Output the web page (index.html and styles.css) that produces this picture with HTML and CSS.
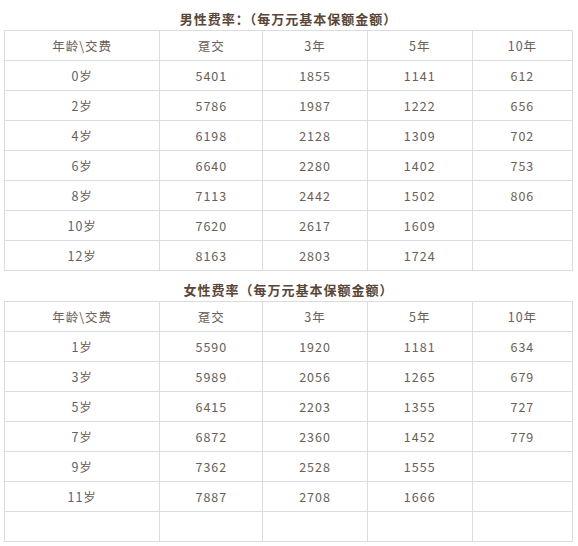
FILE: index.html
```html
<!DOCTYPE html>
<html>
<head>
<meta charset="utf-8">
<link rel="stylesheet" href="styles.css">
</head>
<body>
<div class="page">
  <div class="title">男性费率：（每万元基本保额金额）</div>
  <table class="rates">
    <colgroup><col class="c1"><col class="c2"><col class="c3"><col class="c4"><col class="c5"></colgroup>
    <tr><td>年龄\交费</td><td>趸交</td><td>3年</td><td>5年</td><td>10年</td></tr>
    <tr><td>0岁</td><td>5401</td><td>1855</td><td>1141</td><td>612</td></tr>
    <tr><td>2岁</td><td>5786</td><td>1987</td><td>1222</td><td>656</td></tr>
    <tr><td>4岁</td><td>6198</td><td>2128</td><td>1309</td><td>702</td></tr>
    <tr><td>6岁</td><td>6640</td><td>2280</td><td>1402</td><td>753</td></tr>
    <tr><td>8岁</td><td>7113</td><td>2442</td><td>1502</td><td>806</td></tr>
    <tr><td>10岁</td><td>7620</td><td>2617</td><td>1609</td><td></td></tr>
    <tr><td>12岁</td><td>8163</td><td>2803</td><td>1724</td><td></td></tr>
  </table>
  <div class="title">女性费率（每万元基本保额金额）</div>
  <table class="rates">
    <colgroup><col class="c1"><col class="c2"><col class="c3"><col class="c4"><col class="c5"></colgroup>
    <tr><td>年龄\交费</td><td>趸交</td><td>3年</td><td>5年</td><td>10年</td></tr>
    <tr><td>1岁</td><td>5590</td><td>1920</td><td>1181</td><td>634</td></tr>
    <tr><td>3岁</td><td>5989</td><td>2056</td><td>1265</td><td>679</td></tr>
    <tr><td>5岁</td><td>6415</td><td>2203</td><td>1355</td><td>727</td></tr>
    <tr><td>7岁</td><td>6872</td><td>2360</td><td>1452</td><td>779</td></tr>
    <tr><td>9岁</td><td>7362</td><td>2528</td><td>1555</td><td></td></tr>
    <tr><td>11岁</td><td>7887</td><td>2708</td><td>1666</td><td></td></tr>
    <tr><td></td><td></td><td></td><td></td><td></td></tr>
  </table>
</div>
</body>
</html>
```
FILE: styles.css
```css
html, body {
  margin: 0;
  padding: 0;
  background: #ffffff;
}
.page {
  padding: 0 5px 0 4px;
  width: 569px;
  font-family: "Noto Sans CJK SC", "Noto Sans", sans-serif;
}
.title {
  padding-top: 10px;
  height: 20px;
  line-height: 18px;
  text-align: center;
  font-size: 13px;
  font-weight: bold;
  color: #5a4636;
  letter-spacing: 1px;
}
.rates {
  border-collapse: collapse;
  width: 569px;
  table-layout: fixed;
  font-size: 12.5px;
  color: #6a5e55;
  letter-spacing: 1px;
}
.c1 { width: 155px; }
.c2 { width: 103px; }
.c3 { width: 104px; }
.c4 { width: 105px; }
.c5 { width: 100px; }
.rates td {
  border: 1px solid #dcdcdc;
  height: 29px;
  padding: 0;
  text-align: center;
  vertical-align: middle;
  line-height: 16px;
}
```
